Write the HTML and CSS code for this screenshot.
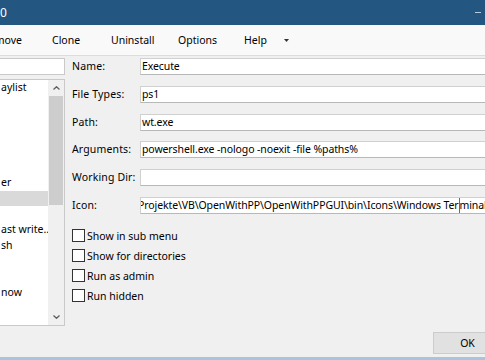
FILE: index.html
```html
<!DOCTYPE html>
<html>
<head>
<meta charset="utf-8">
<link rel="stylesheet" href="styles.css">
</head>
<body>
<div class="window">
  <div class="titlebar">
    <span class="title">0</span>
    <div class="controls">
      <span class="ctl"><span class="glyph-min"></span></span>
      <span class="ctl"><span class="glyph-max"></span></span>
      <span class="ctl"><svg width="9" height="9" viewBox="0 0 9 9"><path d="M0.5 0.5 L8.5 8.5 M8.5 0.5 L0.5 8.5" stroke="#b9cbdb" stroke-width="1"/></svg></span>
    </div>
  </div>
  <div class="menubar">
    <span class="mi mi-first">Remove</span>
    <span class="mi mi-clone">Clone</span>
    <span class="mi mi-uninstall">Uninstall</span>
    <span class="mi mi-options">Options</span>
    <span class="mi mi-help">Help</span>
    <span class="mi mi-more"><svg width="5" height="3" viewBox="0 0 5 3"><polygon points="0,0 5,0 2.5,3" fill="#333"/></svg></span>
  </div>
  <div class="content">
    <div class="leftcol">
      <div class="search"></div>
      <div class="list">
        <ul class="items">
          <li>aylist</li>
          <li></li>
          <li></li>
          <li></li>
          <li></li>
          <li></li>
          <li>er</li>
          <li class="selected"></li>
          <li></li>
          <li>ast write...</li>
          <li>sh</li>
          <li></li>
          <li></li>
          <li>now</li>
          <li></li>
        </ul>
        <div class="scrollbar">
          <div class="sb-btn"><svg width="7" height="4" viewBox="0 0 7 4"><polyline points="0.5,3.5 3.5,0.7 6.5,3.5" fill="none" stroke="#606060" stroke-width="1.3"/></svg></div>
          <div class="sb-track"><div class="sb-thumb"></div></div>
          <div class="sb-btn"><svg width="7" height="4" viewBox="0 0 7 4"><polyline points="0.5,0.5 3.5,3.3 6.5,0.5" fill="none" stroke="#606060" stroke-width="1.3"/></svg></div>
        </div>
      </div>
    </div>
    <div class="form">
      <div class="fields">
        <label class="lbl">Name:</label>
        <div class="tb">Execute</div>
        <label class="lbl">File Types:</label>
        <div class="tb">ps1</div>
        <label class="lbl">Path:</label>
        <div class="tb">wt.exe</div>
        <label class="lbl">Arguments:</label>
        <div class="tb">powershell.exe -nologo -noexit -file %paths%</div>
        <label class="lbl">Working Dir:</label>
        <div class="tb"></div>
        <label class="lbl">Icon:</label>
        <div class="tb tb-icon"><span class="scrolled">Projekte\VB\OpenWithPP\OpenWithPPGUI\bin\Icons\Windows Ter<span class="caret"></span>minal.ico</span></div>
      </div>
      <div class="checks">
        <div class="check"><span class="cb"></span><span>Show in sub menu</span></div>
        <div class="check"><span class="cb"></span><span>Show for directories</span></div>
        <div class="check"><span class="cb"></span><span>Run as admin</span></div>
        <div class="check"><span class="cb"></span><span>Run hidden</span></div>
      </div>
    </div>
  </div>
  <div class="footer">
    <button class="btn">OK</button>
    <button class="btn">Cancel</button>
  </div>
  <div class="bottomstrip"></div>
</div>
</body>
</html>
```
FILE: styles.css
```css
html, body {
  margin: 0;
  padding: 0;
  overflow: hidden;
  width: 485px;
  height: 360px;
  background: #f0f0f0;
}

.window {
  width: 590px;
  font-family: "Noto Sans", sans-serif;
  font-size: 10.5px;
  color: #000;
  background: #f0f0f0;
  display: flex;
  flex-direction: column;
}

/* title bar */
.titlebar {
  height: 25px;
  background: #235782;
  display: flex;
  align-items: center;
  justify-content: space-between;
  color: #fff;
}
.title {
  font-size: 12px;
  line-height: 25px;
}
.controls {
  display: flex;
  height: 25px;
}
.ctl {
  width: 45px;
  flex-shrink: 0;
  display: flex;
  align-items: center;
  justify-content: center;
}
.glyph-min {
  width: 6px;
  height: 1px;
  background: #b9cbdb;
}
.glyph-max {
  width: 7px;
  height: 7px;
  border: 1px solid #b9cbdb;
}

/* menu bar */
.menubar {
  height: 30px;
  background: #f9f9f9;
  border-bottom: 1px solid #dcdcdc;
  display: flex;
  align-items: center;
  white-space: nowrap;
}
.mi {
  box-sizing: border-box;
  display: flex;
  align-items: center;
  height: 30px;
  flex-shrink: 0;
}
.mi-first {
  width: 37px;
  justify-content: flex-end;
  padding-right: 15px;
}
.mi-clone { width: 59px; padding-left: 15px; }
.mi-uninstall { width: 67px; padding-left: 15px; }
.mi-options { width: 66px; padding-left: 15px; }
.mi-help { width: 50px; padding-left: 15px; }
.mi-more { padding-left: 5px; padding-top: 1px; }

/* content */
.content {
  display: grid;
  grid-template-columns: 65px 1fr;
  column-gap: 7px;
  padding-top: 2px;
  align-items: start;
}
.leftcol {
  margin-left: -2px;
  display: flex;
  flex-direction: column;
  gap: 4px;
}
.search {
  height: 17px;
  box-sizing: border-box;
  background: #fff;
  border: 1px solid #c9c9c9;
}
.list {
  height: 247px;
  box-sizing: border-box;
  background: #fff;
  border: 1px solid #c9c9c9;
  display: flex;
}
.items {
  list-style: none;
  margin: 0;
  padding: 0 0 0 1px;
  flex: 1;
  overflow: hidden;
  white-space: nowrap;
}
.items li {
  height: 15.8px;
  line-height: 15.8px;
  margin-left: -1px;
  padding-left: 2px;
}
.items li.selected {
  background: #d9d9d9;
}
.scrollbar {
  width: 16px;
  background: #f0f0f0;
  display: flex;
  flex-direction: column;
}
.sb-btn {
  height: 16px;
  display: flex;
  align-items: center;
  justify-content: center;
}
.sb-track {
  flex: 1;
}
.sb-thumb {
  height: 109px;
  background: #cdcdcd;
  margin: 0 1px;
}

/* form */
.fields {
  display: grid;
  grid-template-columns: 68px 1fr;
  grid-auto-rows: 17px;
  row-gap: 10.8px;
}
.lbl {
  line-height: 17px;
  white-space: nowrap;
  letter-spacing: 0.15px;
}
.tb {
  box-sizing: border-box;
  height: 17px;
  background: #fff;
  border: 1px solid #d0d0d0;
  border-bottom-color: #b8b8b8;
  padding-left: 1px;
  line-height: 15px;
  white-space: nowrap;
  overflow: hidden;
  letter-spacing: -0.1px;
}
.tb-icon .scrolled {
  margin-left: -4px;
}
.caret {
  display: inline-block;
  width: 1px;
  height: 15px;
  background: #6a6a6a;
  vertical-align: top;
}

.checks {
  margin-top: 12px;
  display: flex;
  flex-direction: column;
}
.check {
  height: 20px;
  display: flex;
  align-items: center;
  gap: 2px;
  white-space: nowrap;
}
.cb {
  width: 13px;
  height: 13px;
  box-sizing: border-box;
  border: 1px solid #333;
  background: #fff;
}

/* footer */
.footer {
  display: flex;
  justify-content: flex-end;
  gap: 7px;
  padding-right: 12px;
  margin-top: 6px;
  padding-bottom: 3px;
}
.btn {
  width: 69px;
  height: 22px;
  box-sizing: border-box;
  background: #e1e1e1;
  border: 1px solid #cccccc;
  font-family: "Noto Sans", sans-serif;
  font-size: 10.5px;
  color: #000;
  padding: 0;
}
.bottomstrip {
  height: 3px;
  background: #aac4de;
}
```
